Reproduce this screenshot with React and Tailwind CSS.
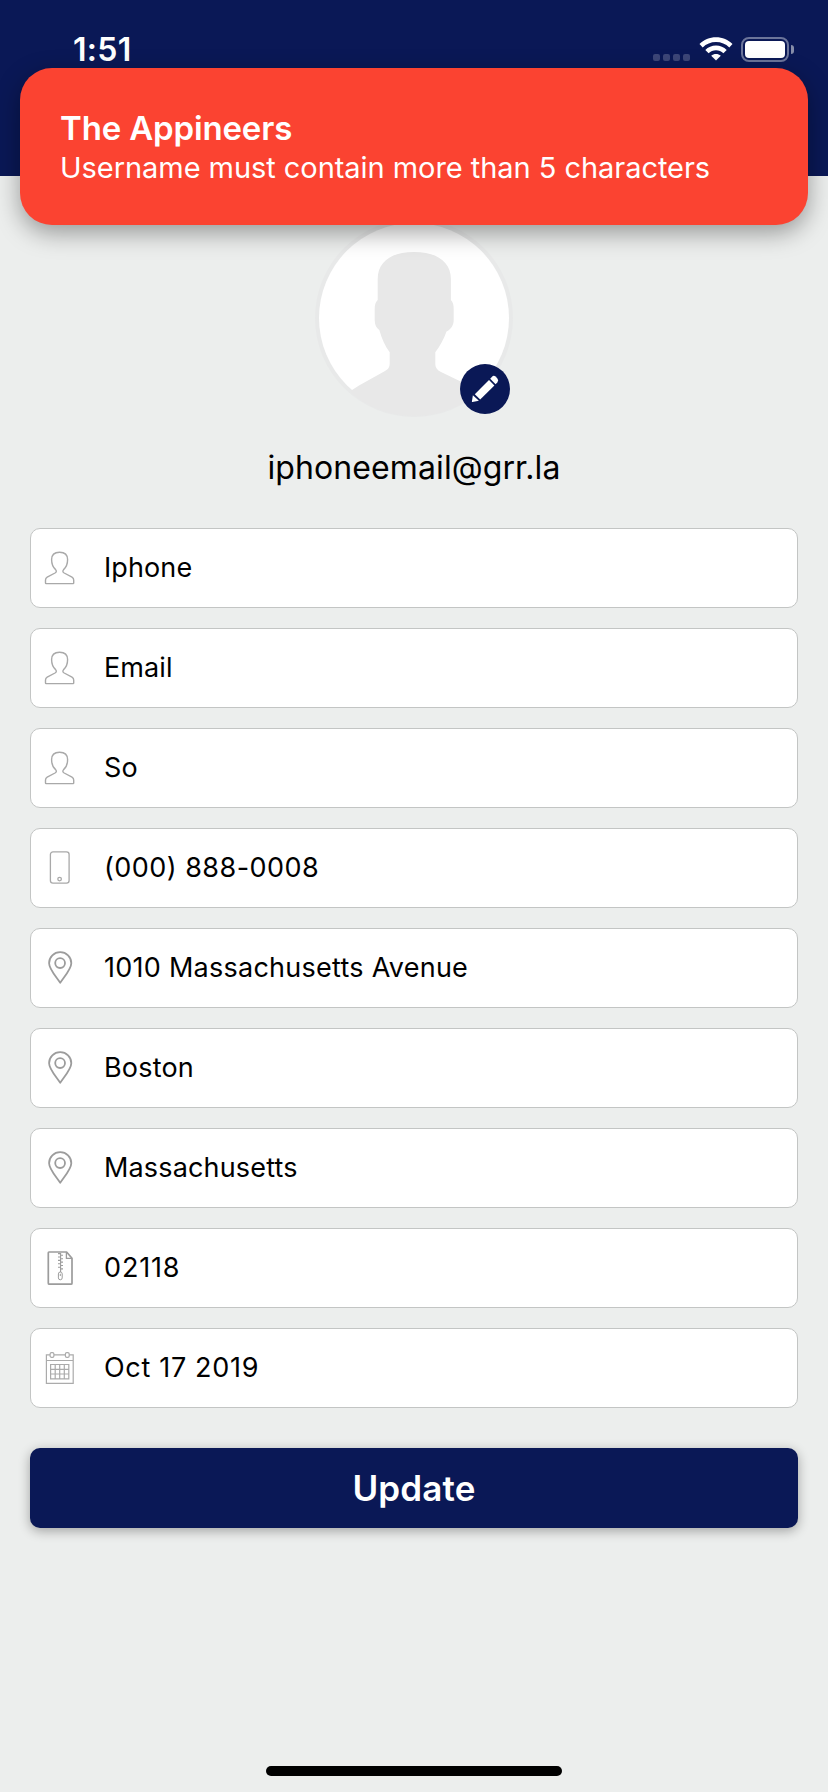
const PersonIcon = () => (
  <svg viewBox="0 0 36 36" className="size-9 shrink-0" fill="none" stroke="#a9a9a9" strokeWidth="1.4" strokeLinejoin="round">
    <path d="M17.6 2.2C12.2 2.2 9.6 4.8 9.6 9.6C9.6 14 11 17.4 13.6 19.6C14.8 21 14.4 22.2 13 23L5.2 27.2C3.8 28 3.5 28.7 3.5 30V33Q3.5 33.6 4.1 33.6H31.1Q31.7 33.6 31.7 33V30C31.7 28.7 31.4 28 30 27.2L22.2 23C20.8 22.2 20.4 21 21.6 19.6C24.2 17.4 25.6 14 25.6 9.6C25.6 4.8 23 2.2 17.6 2.2Z" />
  </svg>
);

const PhoneIcon = () => (
  <svg viewBox="0 0 36 36" className="size-9 shrink-0" fill="none" stroke="#a9a9a9" strokeWidth="1.3">
    <rect x="8.4" y="1.9" width="18.7" height="31.2" rx="2.6" />
    <circle cx="17.6" cy="29.1" r="1.8" />
  </svg>
);

const PinIcon = () => (
  <svg viewBox="0 0 36 36" className="size-9 shrink-0" fill="none" stroke="#9c9c9c" strokeWidth="1.8" strokeLinejoin="round">
    <path d="M18.2 2.2A11 11 0 0 0 7.1 13.2C7.1 19 14 26.5 18.2 32.8C22.4 26.5 29.3 19 29.3 13.2A11 11 0 0 0 18.2 2.2Z" />
    <circle cx="18.1" cy="13.1" r="4.9" />
  </svg>
);

const ZipIcon = () => (
  <svg viewBox="0 0 36 36" className="size-9 shrink-0" fill="none" stroke="#9c9c9c" strokeLinejoin="round">
    <path strokeWidth="1.7" d="M7 2H24.6L30 8.2V33.2Q30 34.2 29 34.2H7.4Q6.3 34.2 6.3 33.2V2.7Q6.3 2 7 2Z" />
    <path strokeWidth="1.3" d="M24.4 2V8.4H30" />
    <path strokeWidth="1.1" d="M16 3.6H18.6V5.3H21M16 7H18.6V8.7H21M16 10.4H18.6V12.1H21M16 13.8H18.6V15.5H21M16 17.2H18.6V18.9H21M18.6 3V22" />
    <rect strokeWidth="1" x="16.4" y="22" width="3.8" height="7.8" rx="1.9" />
    <path strokeWidth="1" d="M18.3 23.8V26" />
  </svg>
);

const CalendarIcon = () => (
  <svg viewBox="0 0 36 36" className="size-9 shrink-0" fill="none" stroke="#ababab" strokeWidth="1.2">
    <path d="M8 4.8H4.4V33.3H31.2V4.8H27.4M12 4.8H23.3M4.4 10.5H31.2" />
    <rect x="8.1" y="2.7" width="3.8" height="4.6" rx="1.4" />
    <rect x="23.4" y="2.7" width="3.8" height="4.6" rx="1.4" />
    <path d="M8.6 14.5H26.8V28.8H8.6ZM8.6 19.3H26.8M8.6 24H26.8M13.2 14.5V28.8M17.7 14.5V28.8M22.3 14.5V28.8" />
  </svg>
);

const FIELDS = [
  { Icon: PersonIcon, value: "Iphone", track: "tracking-[0.1px]" },
  { Icon: PersonIcon, value: "Email", track: "tracking-[0.1px]" },
  { Icon: PersonIcon, value: "So", track: "tracking-[0.1px]" },
  { Icon: PhoneIcon, value: "(000) 888-0008", track: "tracking-[0.46px]" },
  { Icon: PinIcon, value: "1010 Massachusetts Avenue", track: "tracking-[0.26px]" },
  { Icon: PinIcon, value: "Boston", track: "tracking-[0.2px]" },
  { Icon: PinIcon, value: "Massachusetts", track: "tracking-[0.16px]" },
  { Icon: ZipIcon, value: "02118", track: "tracking-[0.85px]" },
  { Icon: CalendarIcon, value: "Oct 17 2019", track: "tracking-[0.68px]" },
];

function StatusBar() {
  return (
    <header className="flex h-[176px] items-start justify-between bg-[#0a1856] pl-[73px] pr-[34px] pt-[34px] text-white">
      <span className="text-[32px] leading-8 font-semibold tracking-[0.3px]">1:51</span>
      <div className="flex items-start pt-[3px]">
        <div className="mt-[17px] mr-[9px] flex gap-[3px]">
          {[0, 1, 2, 3].map((i) => (
            <span key={i} className="size-[7px] shrink-0 rounded-[2px] bg-[#3c4678]" />
          ))}
        </div>
        <svg viewBox="0 0 34 24" className="mr-[8px] h-6 w-[34px]" fill="#fff">
          <path d="M17 0.3C23.4 0.3 29.3 2.8 33.5 7L30.3 10.4C26.8 7 22.1 5 17 5S7.2 7 3.7 10.4L0.5 7C4.7 2.8 10.6 0.3 17 0.3Z" />
          <path d="M17 8.6C21.1 8.6 24.9 10.2 27.7 12.9L24.4 16.2C22.4 14.4 19.8 13.3 17 13.3S11.6 14.4 9.6 16.2L6.3 12.9C9.1 10.2 12.9 8.6 17 8.6Z" />
          <path d="M17 16.9C18.8 16.9 20.4 17.5 21.8 18.7L17 23.6L12.2 18.7C13.6 17.5 15.2 16.9 17 16.9Z" />
        </svg>
        <div className="flex items-center gap-[2px]">
          <div className="h-[25px] w-12 rounded-[8px] border-2 border-[#6b749a] p-[2px]">
            <div className="h-full rounded-[4px] bg-white" />
          </div>
          <div className="h-[9px] w-[3px] rounded-r-full bg-[#868da9]" />
        </div>
      </div>
    </header>
  );
}

function Toast() {
  return (
    <div className="absolute top-[68px] left-5 flex h-[157px] w-[788px] flex-col rounded-[32px] bg-[#fb4331] pt-[40px] pl-[40px] text-white shadow-[0_8px_24px_rgba(0,0,0,0.36)]">
      <p className="text-[33px] leading-10 font-semibold tracking-[-0.15px] whitespace-nowrap">The Appineers</p>
      <p className="text-[29px] leading-[39px] tracking-[-0.05px] whitespace-nowrap">
        Username must contain more than 5 characters
      </p>
    </div>
  );
}

function Avatar() {
  return (
    <div className="relative mt-[43px] size-[198px]">
      <svg viewBox="0 0 198 198" className="size-full">
        <defs>
          <clipPath id="disc">
            <circle cx="99" cy="99" r="98" />
          </clipPath>
        </defs>
        <circle cx="99" cy="99" r="99" fill="#e8e9e9" />
        <circle cx="99" cy="99" r="95" fill="#fff" />
        <path
          clipPath="url(#disc)"
          fill="#e8e8e8"
          d="M99 33C76 33 62.7 43 62.7 60V81C60.5 83 59.7 86 59.7 90V101C59.7 106 61.5 109 64.3 111C67 120 70 127 74.7 133.3V144C74.7 148 73.5 150 70 152L44 166.5L37 171L30 198H168L161 171L154 166.5L126 153C122 151 120.3 148.5 120.3 145V133.3C125 127 129 120 131.5 112.5C136 110.5 138.7 106 138.7 101V90C138.7 86 138 83 135.9 81V60C135.9 43 122 33 99 33Z"
        />
      </svg>
      <button className="absolute top-[145px] left-[145px] size-[50px] rounded-full bg-[#0a1856]" aria-label="Edit photo">
        <svg viewBox="0 0 50 50" className="size-full" fill="#fff">
          <path d="M14.8 30.2L29 16L34.4 21.4L20.2 35.5Z" />
          <path d="M12.9 31.2L18.9 36.7L12.4 38Q11.9 38 11.9 37.5Z" />
          <path d="M30.2 14.8L31.8 12.9Q33.6 11 35.6 12.6L37.4 14.5Q39 16.4 37.4 18.3L35.6 20.2Z" />
        </svg>
      </button>
    </div>
  );
}

export default function App() {
  return (
    <div className="relative flex h-[1792px] w-[828px] flex-col bg-[#eceeed] font-['Inter',sans-serif] text-black">
      <StatusBar />
      <main className="flex flex-1 flex-col items-center px-[30px]">
        <Avatar />
        <p className="mt-[31px] text-[32px] leading-10 tracking-[0.1px]">iphoneemail@grr.la</p>
        <form className="mt-10 flex w-full flex-col gap-5">
          {FIELDS.map(({ Icon, value, track }) => (
            <div key={value} className="flex h-20 items-center rounded-[10px] border border-[#c3c5c4] bg-white pl-[11px]">
              <Icon />
              <span className={`ml-[26px] text-[27px] leading-8 ${track}`}>{value}</span>
            </div>
          ))}
          <button
            type="button"
            className="mt-5 flex h-20 items-center justify-center rounded-[10px] bg-[#0a1856] text-[35px] font-semibold tracking-[0.15px] text-white shadow-[0_3px_12px_rgba(0,0,0,0.32)]"
          >
            Update
          </button>
        </form>
      </main>
      <div className="mb-4 h-[10px] w-[296px] self-center rounded-full bg-black" />
      <Toast />
    </div>
  );
}
